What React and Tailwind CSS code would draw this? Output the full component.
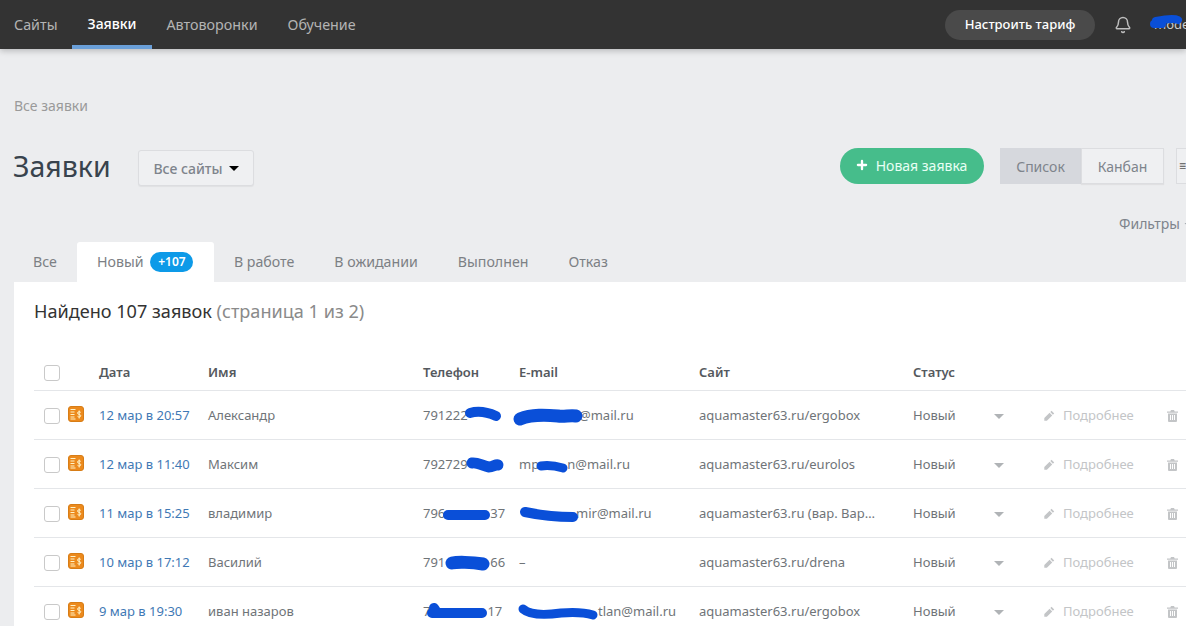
import React from "react";
import { Plus, Bell, ChevronDown } from "lucide-react";

const grid = "grid grid-cols-[65px_109px_215px_96px_180px_214px_81px_49px_124px_1fr] items-center";

function Scribble({ d, w, h, sw, className }) {
  return (
    <svg width={w} height={h} viewBox={`0 0 ${w} ${h}`} className={`absolute overflow-visible ${className}`} fill="none">
      <path d={d} stroke="#0a4fd8" strokeLinecap="round" strokeLinejoin="round" strokeWidth={sw} />
    </svg>
  );
}

const rows = [
  {
    date: "12 мар в 20:57", name: "Александр", phone: "791222", phoneEnd: "", email: "@mail.ru", emailPad: "pl-[60px]", site: "aquamaster63.ru/ergobox",
    p: <Scribble w={42} h={20} sw={10} className="left-[40px] top-0" d="M7 7 C14 5 24 6 33 10" />,
    e: <Scribble w={72} h={22} sw={13} className="left-[-7px] top-0" d="M8 13 C20 8 34 9 46 10 C52 11 58 9 64 10" />,
  },
  {
    date: "12 мар в 11:40", name: "Максим", phone: "792729", phoneEnd: "", email: "mp", emailEnd: "n@mail.ru", site: "aquamaster63.ru/eurolos",
    p: <Scribble w={42} h={20} sw={11} className="left-[40px] top-0" d="M9 8 C14 7 20 11 26 12 C30 12 33 9 35 10" />,
    e: <Scribble w={38} h={16} sw={9} className="left-[13px] top-[2px]" d="M9 9 C16 8 24 9 31 11" />,
  },
  {
    date: "11 мар в 15:25", name: "владимир", phone: "796", phoneEnd: "37", phoneGap: "w-[45px]", email: "mir@mail.ru", emailPad: "pl-[57px]", site: "aquamaster63.ru (вар. Вар…",
    p: <Scribble w={56} h={20} sw={10} className="left-[16px] top-0" d="M9 11 L46 11" />,
    e: <Scribble w={68} h={20} sw={10} className="left-[-2px] top-0" d="M8 8 C22 11 40 13 56 13" />,
  },
  {
    date: "10 мар в 17:12", name: "Василий", phone: "791", phoneEnd: "66", phoneGap: "w-[45px]", email: "–", site: "aquamaster63.ru/drena",
    p: <Scribble w={52} h={20} sw={13} className="left-[16px] top-0" d="M13 10 C18 9 32 9 44 11" />,
  },
  {
    date: "9 мар в 19:30", name: "иван назаров", phone: "7", phoneEnd: "17", phoneGap: "w-[57px]", email: "tlan@mail.ru", emailPad: "pl-[79px]", site: "aquamaster63.ru/ergobox",
    p: <Scribble w={68} h={20} sw={10} className="left-0 top-0" d="M11 6 L13 9 M9 11 L59 11" />,
    e: <Scribble w={84} h={20} sw={9} className="left-[-2px] top-0" d="M6 7 C14 14 30 13 44 11 C56 10 66 10 76 13" />,
  },
];

function Row({ r }) {
  return (
    <div className={`${grid} h-[49px] border-b border-[#e4e6e9] pt-[2px] text-[13px] text-[#6f7478]`}>
      <div className="flex items-center gap-[8px] pl-[10px]">
        <span className="block size-[16px] rounded-[3px] border border-[#c9c9c9] bg-white" />
        <span className="flex size-[16px] -translate-y-[2px] items-center justify-center rounded-[3px] border border-[#d77d16] bg-[#ec8a1d]">
          <svg width="12" height="12" viewBox="0 0 12 12" fill="none" stroke="#fff3c8" strokeWidth="1">
            <path d="M0.500 1.500h5M0.500 4h4M0.500 6.500h4M0.500 9h4M0.500 11h5" />
            <path d="M10.800 4.500C10.300 3.500 7.500 3.500 7.500 5c0 1.800 3.300 1 3.300 2.800 0 1.500-2.800 1.500-3.300 .5M9.200 2.500v8" />
          </svg>
        </span>
      </div>
      <div className="text-[#3f79b5]">{r.date}</div>
      <div>{r.name}</div>
      <div className="relative flex whitespace-nowrap">
        <span>{r.phone}</span>
        {r.phoneGap && <span className={`block ${r.phoneGap}`} />}
        <span>{r.phoneEnd}</span>
        {r.p}
      </div>
      <div className={`relative flex whitespace-nowrap ${r.emailPad || ""}`}>
        <span>{r.email}</span>
        {r.emailEnd && <span className="ml-[28px]">{r.emailEnd}</span>}
        {r.e}
      </div>
      <div className="whitespace-nowrap">{r.site}</div>
      <div>Новый</div>
      <div><span className="block h-0 w-0 border-x-[5px] border-t-[5px] border-x-transparent border-t-[#b0b3b6]" /></div>
      <div className="flex items-center gap-[8px] text-[#c3c5c7]">
        <svg width="12" height="12" viewBox="0 0 12 12" fill="#c3c5c7"><path d="M8.600.8l2.600 2.600-1.300 1.300-2.600-2.600zM6.600 2.800l2.600 2.600-5.300 5.300H1.300V8.100z" /></svg>
        <span>Подробнее</span>
      </div>
      <div>
        <svg width="11" height="12" viewBox="0 0 11 12" fill="#c3c5c7"><path d="M4 0h3l.7 1.500H11v1.200H0V1.500h3.300zM1 3.500h9V11a1 1 0 0 1-1 1H2a1 1 0 0 1-1-1zM3 5v5h1V5zm2 0v5h1V5zm2 0v5h1V5z" /></svg>
      </div>
    </div>
  );
}

export default function App() {
  return (
    <div className="h-[626px] w-[1186px] overflow-hidden bg-[#ecedef] font-['Noto_Sans','Open_Sans',sans-serif]">
      <header className="relative flex h-[49px] items-center justify-between bg-[#333333] shadow-[0_2px_6px_rgba(0,0,0,0.22)]">
        <nav className="flex h-full text-[14.300px] text-[#b4b4b4]">
          <a className="flex items-center pl-[14px] pr-[15px]">Сайты</a>
          <a className="flex items-center border-b-4 border-[#6a9fd8] px-[15px] pt-[1px] text-[14px] font-medium text-white">Заявки</a>
          <a className="flex items-center px-[15px]">Автоворонки</a>
          <a className="flex items-center px-[15px]">Обучение</a>
        </nav>
        <div className="flex items-center">
          <button className="flex h-[30px] w-[150px] items-center justify-center rounded-full bg-[#4a4a4a] text-[13px] font-medium text-white">Настроить тариф</button>
          <Bell size={18} strokeWidth={2} className="ml-[19px] text-[#bdbdbd]" />
          <div className="relative ml-[16px] w-[38px] overflow-hidden whitespace-nowrap pl-[6px] text-[13px] text-[#cfcfcf]">
            <span>mode</span>
            <svg width="39" height="20" viewBox="0 0 39 20" className="absolute left-0 top-0" fill="none">
              <path d="M6 9 L14 9 M8 6 C18 4 26 3 30 5" stroke="#0a4fd8" strokeWidth="8" strokeLinecap="round" />
            </svg>
          </div>
        </div>
      </header>

      <main>
        <div className="pl-[14px] pt-[48px] text-[14px] leading-[18px] text-[#9a9a9a]">Все заявки</div>

        <div className="mt-[35px] flex h-[36px] items-center pl-[13px]">
          <h1 className="w-[97px] shrink-0 -translate-y-[2px] whitespace-nowrap text-[28.500px] font-normal leading-none text-[#38434d]">Заявки</h1>
          <button className="ml-[28px] flex h-[36px] w-[116px] shrink-0 items-center justify-center gap-[6px] rounded-[3px] border border-[#dcdde0] bg-[#eff0f2] text-[14px] font-medium text-[#7e848c] shadow-[0_1px_1px_rgba(0,0,0,0.05)]">
            Все сайты
            <span className="block h-0 w-0 border-x-[5px] border-t-[5px] border-x-transparent border-t-black" />
          </button>
          <button className="ml-[586px] flex h-[36px] w-[144px] shrink-0 -translate-y-[2px] items-center justify-center gap-[7px] rounded-full bg-[#46bd8b] pb-[2px] pr-[2px] text-[14px] text-[#e8fff4]">
            <Plus size={14} strokeWidth={4} className="text-white" />
            Новая заявка
          </button>
          <div className="ml-[16px] flex h-[36px] shrink-0 -translate-y-[2px] text-[14px] text-[#7e848c]">
            <span className="flex w-[81px] items-center justify-center bg-[#d6d8dd]">Список</span>
            <span className="flex w-[83px] items-center justify-center border border-[#dcdde0] bg-[#eff0f2] shadow-[0_1px_1px_rgba(0,0,0,0.05)]">Канбан</span>
          </div>
          <span className="ml-[12px] flex h-[36px] w-[30px] shrink-0 -translate-y-[2px] items-center border border-[#dcdde0] bg-[#eff0f2] pl-[2px] text-[12px] text-[#555]">≡</span>
        </div>

        <div className="mt-[29px] flex h-[18px] overflow-hidden pl-[1119px] text-[14px] leading-[18px] text-[#7e848c]">
          <span className="flex shrink-0 items-center gap-[3px] whitespace-nowrap">Фильтры<ChevronDown size={9} /></span>
        </div>

        <div className="mt-[9px] flex h-[40px] pl-[14px] text-[14.200px] text-[#7c8084]">
          <a className="flex items-center pl-[19px] pr-[20px]">Все</a>
          <a className="flex w-[137px] items-center gap-[7px] rounded-t-[3px] bg-white pl-[20px]">
            Новый
            <span className="flex h-[20px] w-[43px] items-center justify-center rounded-full bg-[#0d9ae8] text-[12px] font-semibold text-white">+107</span>
          </a>
          <a className="flex items-center px-[20px]">В работе</a>
          <a className="flex items-center px-[20px]">В ожидании</a>
          <a className="flex items-center px-[20px]">Выполнен</a>
          <a className="flex items-center px-[20px]">Отказ</a>
        </div>

        <section className="ml-[14px] bg-white pl-[20px] pt-[17px]">
          <div className="text-[18.100px] leading-[24px] text-[#333]">
            Найдено 107 заявок <span className="text-[#8a8a8a]">(страница 1 из 2)</span>
          </div>
          <div className={`${grid} mt-[29px] h-[39px] border-b border-[#e4e6e9] pt-[4px] text-[13px] font-semibold text-[#55595e]`}>
            <div className="pl-[10px]"><span className="block size-[16px] rounded-[3px] border border-[#c9c9c9] bg-white" /></div>
            <div>Дата</div>
            <div>Имя</div>
            <div>Телефон</div>
            <div>E-mail</div>
            <div>Сайт</div>
            <div>Статус</div>
            <div /><div /><div />
          </div>
          {rows.map((r, i) => <Row key={i} r={r} />)}
        </section>
      </main>
    </div>
  );
}
